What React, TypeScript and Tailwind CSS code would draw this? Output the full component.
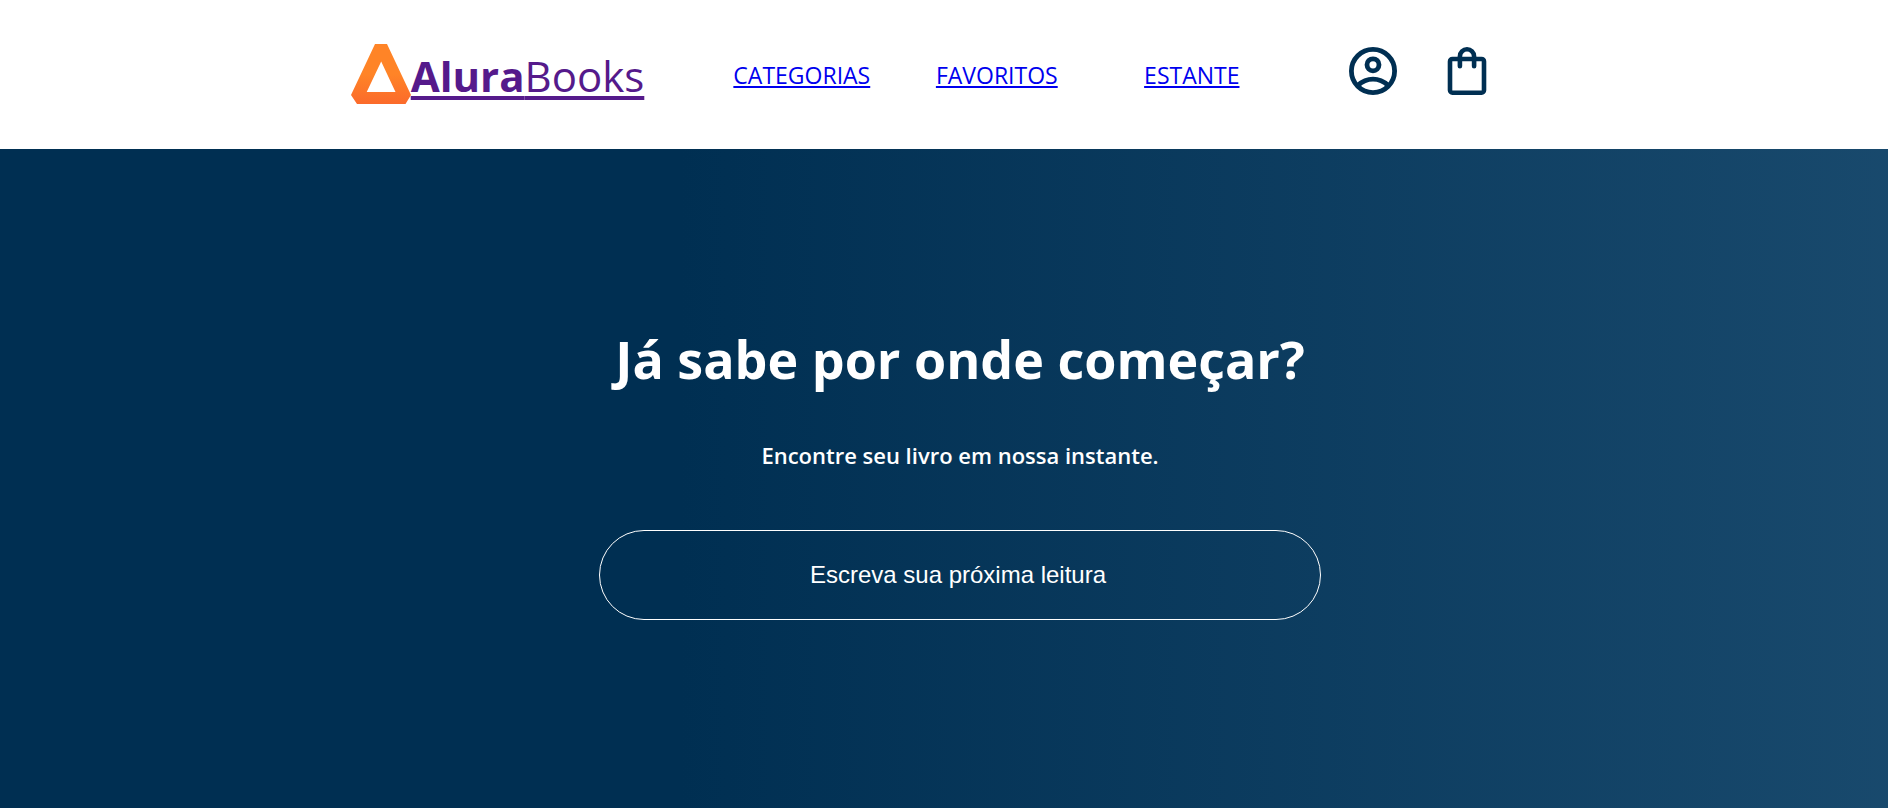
const links = ['CATEGORIAS', 'FAVORITOS', 'ESTANTE'];

function LogoMark() {
  return (
    <svg viewBox="0 0 60 60" className="size-15 shrink-0" aria-hidden="true">
      <defs>
        <linearGradient id="mark" x1="0" y1="0" x2="0" y2="1">
          <stop offset="0.5" stopColor="#ff8427" />
          <stop offset="1" stopColor="#fb6a2b" />
        </linearGradient>
      </defs>
      <path
        fill="url(#mark)"
        fillRule="evenodd"
        d="M24 0H36L60 51L54.5 60H6L0 51ZM30.2 17.5L15.7 48H44.5Z"
      />
    </svg>
  );
}

function ProfileIcon() {
  return (
    <svg viewBox="0 0 48 48" className="size-12" fill="none" stroke="#002f52" strokeWidth="4.8" aria-hidden="true">
      <circle cx="24" cy="24" r="21.6" />
      <circle cx="24" cy="17.8" r="6" />
      <path d="M8.6 38.6C13 34.6 18 32.2 24 32.2S35 34.6 39.4 38.6" />
    </svg>
  );
}

function BagIcon() {
  return (
    <svg viewBox="0 0 39 48" className="h-12 w-10" fill="none" stroke="#002f52" strokeWidth="4.6" aria-hidden="true">
      <rect x="2.5" y="12" width="34" height="33.7" rx="2.4" />
      <path d="M12.4 19.2V9.4A7.1 7.1 0 0 1 26.6 9.4V19.2" strokeLinecap="round" />
    </svg>
  );
}

export default function App() {
  return (
    <div className="flex min-h-screen flex-col overflow-x-hidden bg-white font-['Open_Sans','Noto_Sans',sans-serif]">
      <header className="flex h-[149px] items-center justify-center pr-[50px]">
        <a href="#" className="mb-0.5 flex items-center text-[42px] leading-[60px] text-[#551a8b]">
          <LogoMark />
          <span className="pt-1 underline decoration-4 underline-offset-4">
            <strong className="font-bold">Alura</strong>
            <span className="font-normal">Books</span>
          </span>
        </a>
        <nav className="ml-15">
          <ul className="flex">
            {links.map((label) => (
              <li key={label} className="w-[195px] text-center">
                <a
                  href="#"
                  className="text-[23px] leading-8 font-normal text-[#0000ee] underline decoration-2 underline-offset-2"
                >
                  {label}
                </a>
              </li>
            ))}
          </ul>
        </nav>
        <div className="mb-2 ml-15 flex gap-[50px]">
          <button type="button" aria-label="Perfil">
            <ProfileIcon />
          </button>
          <button type="button" aria-label="Sacola">
            <BagIcon />
          </button>
        </div>
      </header>
      <main className="flex flex-1 flex-col items-center bg-[linear-gradient(90deg,#002f52_36%,#326589_168%)] pt-[174px] pl-8 text-white">
        <h1 className="text-[52px] leading-[72px] font-bold">Já sabe por onde começar?</h1>
        <h2 className="mt-[42px] text-[22px] leading-9 font-semibold">Encontre seu livro em nossa instante.</h2>
        <input
          type="text"
          aria-label="Buscar livro"
          placeholder="Escreva sua próxima leitura"
          className="mt-[57px] h-[90px] w-[722px] rounded-full border border-white bg-transparent pr-1 text-center font-['Liberation_Sans',sans-serif] text-2xl text-white placeholder:text-white"
        />
      </main>
    </div>
  );
}
